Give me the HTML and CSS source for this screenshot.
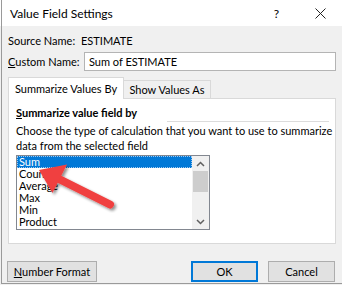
FILE: index.html
```html
<!DOCTYPE html>
<html>
<head>
<meta charset="utf-8">
<link rel="stylesheet" href="styles.css">
</head>
<body>
<div class="window">
  <div class="titlebar">
    <span class="title">Value Field Settings</span>
    <span class="help">?</span>
    <svg class="close" width="11" height="11" viewBox="0 0 11 11"><path d="M0.5 0.5 L10.5 10.5 M10.5 0.5 L0.5 10.5" stroke="#222" stroke-width="1" fill="none"/></svg>
  </div>
  <div class="body">
    <div class="row source">
      <span class="lbl">Source Name:</span>
      <span class="val">ESTIMATE</span>
    </div>
    <div class="row custom">
      <span class="lbl"><u>C</u>ustom Name:</span>
      <div class="input">Sum of ESTIMATE</div>
    </div>
    <div class="tabs">
      <div class="tab active">Summarize Values By</div>
      <div class="tab">Show Values As</div>
    </div>
    <div class="panel">
      <div class="heading">
        <span class="htext"><u>S</u>ummarize value field by</span>
        <span class="hline"></span>
      </div>
      <p class="desc">Choose the type of calculation that you want to use to summarize<br>data from the selected field</p>
      <div class="listbox">
        <ul class="items">
          <li class="sel">Sum</li>
          <li>Count</li>
          <li>Average</li>
          <li>Max</li>
          <li>Min</li>
          <li>Product</li>
        </ul>
        <div class="scroll">
          <svg class="arr" width="9" height="6" viewBox="0 0 9 6"><path d="M1 5 L4.5 1.5 L8 5" stroke="#606060" stroke-width="1.5" fill="none"/></svg>
          <div class="thumb"></div>
          <div class="track"></div>
          <svg class="arr" width="9" height="6" viewBox="0 0 9 6"><path d="M1 1 L4.5 4.5 L8 1" stroke="#606060" stroke-width="1.5" fill="none"/></svg>
        </div>
      </div>
    </div>
    <div class="buttons">
      <div class="btn numfmt"><u>N</u>umber Format</div>
      <div class="spacer"></div>
      <div class="btn ok">OK</div>
      <div class="btn cancel">Cancel</div>
    </div>
  </div>
  <svg class="arrow" width="342" height="285" viewBox="0 0 342 285">
    <defs>
      <filter id="sh" x="-20%" y="-20%" width="140%" height="140%">
        <feGaussianBlur in="SourceAlpha" stdDeviation="1.5"/>
        <feOffset dx="1.5" dy="2" result="b"/>
        <feComponentTransfer><feFuncA type="linear" slope="0.45"/></feComponentTransfer>
        <feMerge><feMergeNode/><feMergeNode in="SourceGraphic"/></feMerge>
      </filter>
    </defs>
    <g filter="url(#sh)" fill="#f0403f">
      <line x1="59" y1="179" x2="110" y2="204.5" stroke="#f0403f" stroke-width="8" stroke-linecap="round"/>
      <polygon points="39,170 67,164.5 52.5,193"/>
    </g>
  </svg>
</div>
</body>
</html>
```

FILE: styles.css
```css
* { box-sizing: border-box; }
html, body { margin: 0; padding: 0; background: #fff; }
body {
  font-family: Lato, "Open Sans", sans-serif;
  font-size: 11px;
  color: #000;
}
.window {
  position: relative;
  width: 342px;
  height: 285px;
  overflow: hidden;
  background: #f0f0f0;
  white-space: nowrap;
}
.window::before {
  content: "";
  position: absolute;
  left: 1px; top: 0; bottom: 1px;
  width: 1px;
  background: #9a9a9a;
}
.window::after {
  content: "";
  position: absolute;
  left: 1px; right: 0; bottom: 1px;
  height: 1px;
  background: #9a9a9a;
}
.titlebar {
  height: 26px;
  background: #fff;
  display: flex;
  align-items: center;
  padding-left: 10px;
}
.title { font-size: 12px; flex: 1; }
.help { font-size: 12px; margin-right: 36px; }
.close { margin-right: 16px; }
.body { padding: 6px 6px 0 8px; }
.row { display: flex; align-items: center; }
.lbl { flex: none; }
.source { height: 16px; }
.source .lbl { width: 73px; }
.custom { margin-top: 4px; height: 19px; }
.custom .lbl { width: 76px; }
.input {
  flex: 1;
  height: 19px;
  background: #fff;
  border: 1px solid #b4b4b4;
  padding-left: 4px;
  line-height: 17px;
}
.tabs {
  display: flex;
  align-items: flex-end;
  margin-top: 6px;
  height: 21px;
}
.tab {
  border: 1px solid #d9d9d9;
  border-bottom: none;
  height: 18px;
  line-height: 17px;
  background: #f0f0f0;
  flex: none;
  width: 88px;
  text-align: center;
  margin-left: -1px;
  margin-bottom: 0;
}
.tab.active {
  height: 22px;
  background: #fff;
  line-height: 21px;
  margin-bottom: -1px;
  margin-left: 0;
  position: relative;
  z-index: 1;
  width: 116px;
}
.panel {
  background: #fff;
  border: 1px solid #d9d9d9;
  height: 146px;
  padding: 3px 6px 0 7px;
}
.heading { display: flex; align-items: flex-end; height: 17px; }
.htext { font-weight: bold; }
.hline { flex: 1; height: 1px; background: #dcdcdc; margin: 0 0 -3px 30px; }
.desc { margin: 4px 0 0 0; line-height: 15px; }
.listbox {
  margin-top: 2px;
  width: 194px;
  height: 75px;
  border: 1px solid #828790;
  display: flex;
  background: #fff;
}
.items {
  list-style: none;
  margin: 0;
  padding: 0;
  flex: 1;
}
.items li {
  height: 12px;
  line-height: 12px;
  padding-left: 2px;
}
.items li.sel {
  background: #0078d7;
  color: #fff;
  outline: 1px dotted #9ec8f0;
  outline-offset: -1px;
}
.scroll {
  width: 17px;
  background: #f0f0f0;
  display: flex;
  flex-direction: column;
  align-items: center;
}
.arr { margin: 5px 0 4px; flex: none; }
.thumb { width: 15px; height: 21px; background: #cdcdcd; flex: none; }
.track { flex: 1; }
.buttons {
  display: flex;
  margin-top: 17px;
  padding-right: 1px;
}
.btn {
  height: 21px;
  background: #e1e1e1;
  border: 1px solid #adadad;
  text-align: center;
  line-height: 19px;
}
.numfmt { width: 90px; margin-left: -1px; }
.spacer { flex: 1; }
.ok { width: 67px; border: 2px solid #0078d7; line-height: 17px; }
.cancel { width: 67px; margin-left: 10px; }
.arrow { position: absolute; left: 0; top: 0; pointer-events: none; }
```
